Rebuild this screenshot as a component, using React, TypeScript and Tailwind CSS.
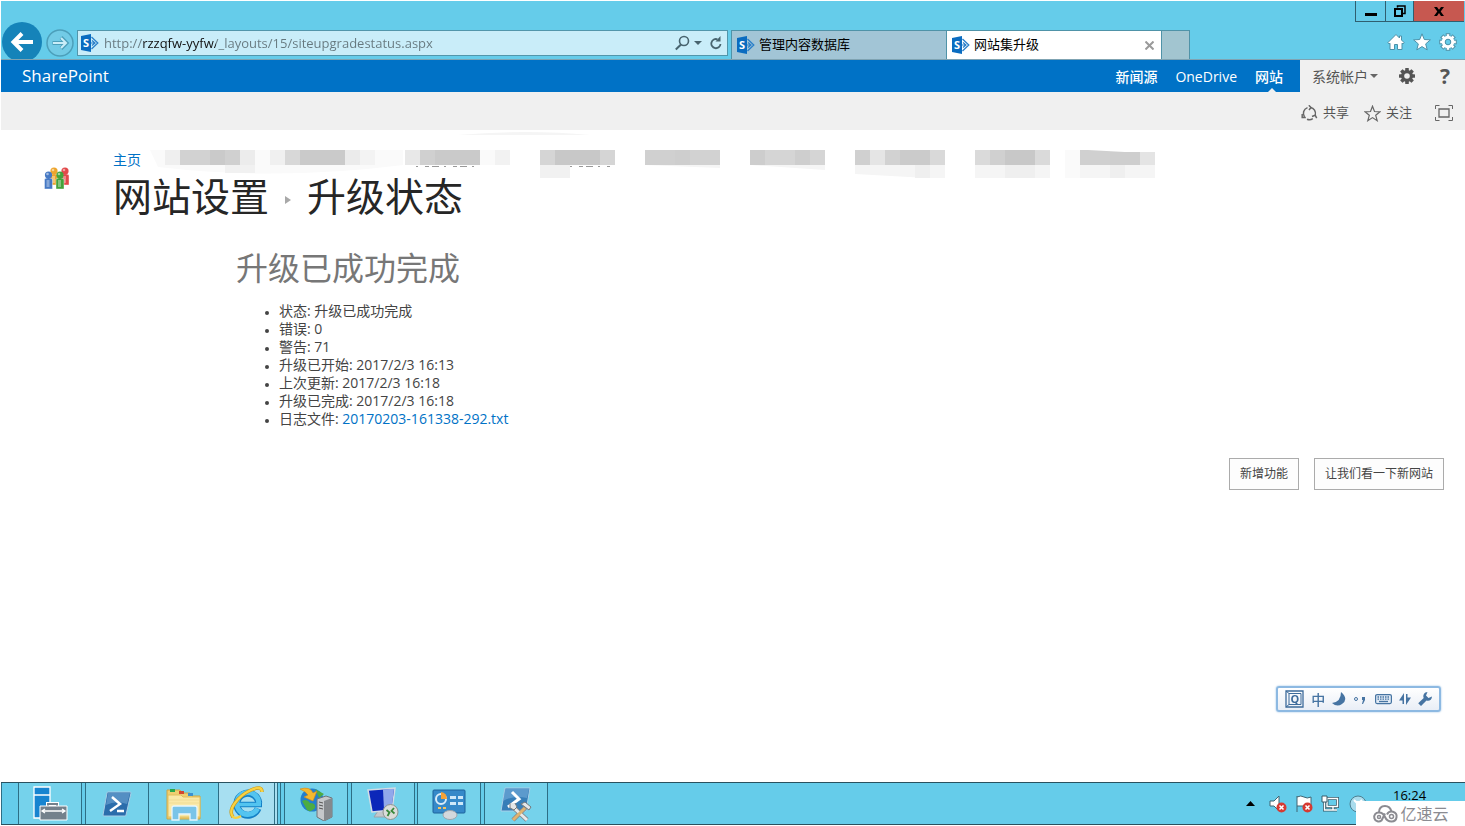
import type { ReactNode } from 'react'

const FONT = "font-['Open_Sans','Noto_Sans_CJK_SC',sans-serif]"

const tabs = [
  { title: '管理内容数据库', active: false },
  { title: '网站集升级', active: true },
]

const details = [
  { label: '状态', value: '升级已成功完成' },
  { label: '错误', value: '0' },
  { label: '警告', value: '71' },
  { label: '升级已开始', value: '2017/2/3 16:13' },
  { label: '上次更新', value: '2017/2/3 16:18' },
  { label: '升级已完成', value: '2017/2/3 16:18' },
]

// Hidden navigation entries: x, width, grey
const mosaic: [number, number, string][] = [
  [15, 15, '#efefef'], [30, 30, '#d2d2d2'], [60, 15, '#cacaca'], [75, 15, '#d0d0d0'], [90, 15, '#ececec'],
  [120, 15, '#f0f0f0'], [135, 15, '#d8d8d8'], [150, 45, '#cacaca'], [195, 15, '#ebebeb'], [210, 15, '#f3f3f3'], [225, 15, '#fafafa'],
  [255, 15, '#e8e8e8'], [270, 15, '#d0d0d0'], [285, 45, '#cacaca'], [330, 15, '#fafafa'], [345, 15, '#f2f2f2'],
  [390, 15, '#d5d5d5'], [405, 45, '#c8c8c8'], [450, 15, '#d5d5d5'],
  [495, 30, '#d0d0d0'], [525, 15, '#cecece'], [540, 30, '#d2d2d2'],
  [600, 15, '#cdcdcd'], [615, 30, '#d5d5d5'], [645, 15, '#cecece'], [660, 15, '#d5d5d5'],
  [705, 15, '#d0d0d0'], [720, 15, '#e5e5e5'], [735, 15, '#d2d2d2'], [750, 30, '#cbcbcb'], [780, 15, '#d9d9d9'],
  [825, 15, '#dadada'], [840, 15, '#d0d0d0'], [855, 30, '#c8c8c8'], [885, 15, '#dadada'],
]

function SharePointIcon() {
  return (
    <svg width="18" height="18" viewBox="0 0 18 18" aria-hidden="true" className="shrink-0">
      <path d="M10.500 3 16.800 9l-6.300 6" fill="none" stroke="#2a7fc9" strokeWidth="1.300" />
      <path d="M11 6.500 14 9l-3 2.500M9 9h5" fill="none" stroke="#2a7fc9" strokeWidth="1.200" />
      <path d="M0 2 10 0v18L0 16z" fill="#0a6cc0" />
      <text x="5" y="13" textAnchor="middle" fontSize="11" fontWeight="700" fill="#fff">S</text>
    </svg>
  )
}

function Gear({ className }: { className: string }) {
  return (
    <svg width="18" height="18" viewBox="-9 -9 18 18" className={className} aria-hidden="true">
      {[0, 45, 90, 135].map((a) => (
        <rect key={a} x="-1.800" y="-8" width="3.600" height="16" rx="0.500" fill="currentColor" transform={`rotate(${a})`} />
      ))}
      <circle r="4.500" fill="none" stroke="currentColor" strokeWidth="3" />
      <circle r="2.800" className="fill-[#f0f0f0]" />
    </svg>
  )
}

function WindowButtons() {
  return (
    <div className="flex h-[21px] border-b border-l border-[#2f5f70]">
      <button aria-label="最小化" className="flex w-[30px] items-center justify-center border-r border-[#2f5f70]">
        <svg width="12" height="12" viewBox="0 0 12 12"><path d="M0 8h12v3H0z" /></svg>
      </button>
      <button aria-label="还原" className="flex w-[28px] items-center justify-center border-r border-[#2f5f70]">
        <svg width="12" height="12" viewBox="0 0 12 12" fill="none" stroke="#000">
          <path d="M3.500 2.500V1h7.500v7.500H9" strokeWidth="1.500" />
          <path d="M1 4h7v7H1z" strokeWidth="2" />
        </svg>
      </button>
      <button aria-label="关闭" className="flex w-[50px] items-center justify-center bg-[#c75850]">
        <svg width="10" height="9" viewBox="0 0 10 9"><path d="M0 0h3l2 2.800L7 0h3L6.700 4.400 10 9H7L5 6 3 9H0l3.300-4.600z" /></svg>
      </button>
    </div>
  )
}

function BrowserBar() {
  return (
    <header className="flex h-[59px] items-end border-b border-[#7fa3b2] bg-[#65ccea] pr-px">
      <button aria-label="后退" className="ml-px shrink-0">
        <svg width="40" height="37" viewBox="0 0 40 37" className="block">
          <circle cx="20" cy="20" r="20" fill="#1583b9" />
          <path d="M31 20H12M20 11.500 11.500 20l8.500 8.500" fill="none" stroke="#fff" strokeWidth="4" />
        </svg>
      </button>
      <button aria-label="前进" className="mr-[3px] ml-1 shrink-0 pb-[2px]">
        <svg width="28" height="28" viewBox="0 0 28 28" className="block">
          <circle cx="14" cy="14" r="13" fill="#72cbe6" stroke="#4c9fba" strokeWidth="1.500" />
          <path d="M6.500 14h14M15 8.500l5.500 5.500-5.500 5.500" fill="none" stroke="#4c9fba" strokeWidth="4" />
          <path d="M7 14h13M15 9l5 5-5 5" fill="none" stroke="#c9edf8" strokeWidth="2" />
        </svg>
      </button>
      <div className="mb-[3px] flex h-[26px] min-w-0 flex-1 items-center border border-[#5296ab] bg-[#c9edf9] pl-[3px]">
        <SharePointIcon />
        <input
          aria-label="地址"
          defaultValue="http://rzzqfw-yyfw/_layouts/15/siteupgradestatus.aspx"
          className="ml-[5px] h-6 min-w-0 flex-1 bg-[linear-gradient(90deg,#66787e_38px,#111_38px,#111_112px,#66787e_112px)] bg-clip-text text-[13px] text-transparent outline-none"
        />
        <button aria-label="搜索" className="mr-1">
          <svg width="15" height="16" viewBox="0 0 15 16" fill="none" stroke="#48646f" strokeWidth="1.600">
            <circle cx="9" cy="6" r="4.500" />
            <path d="M6 9.500.800 14.500" strokeWidth="2" />
          </svg>
        </button>
        <button aria-label="搜索选项" className="mr-2">
          <svg width="8" height="4" viewBox="0 0 8 4" fill="#48646f"><path d="M0 0h8L4 4z" /></svg>
        </button>
        <button aria-label="刷新" className="mr-[5px]">
          <svg width="12" height="14" viewBox="0 0 12 14" fill="none" stroke="#48646f" strokeWidth="1.800">
            <path d="M10.500 8a4.600 4.600 0 1 1-3-4.700" />
            <path d="M10.500 0v5.500H5.500z" fill="#48646f" stroke="none" />
          </svg>
        </button>
      </div>
      <div className="ml-[3px] flex h-[29px] border-t border-l border-[#4f93a8]">
        {tabs.map((tab) => (
          <div
            key={tab.title}
            className={`flex w-[215px] items-center border-r border-[#4f93a8] px-[5px] ${tab.active ? 'bg-white' : 'bg-[#a2c5d6]'}`}
          >
            <SharePointIcon />
            <a href="#" className="ml-1 flex-1 text-[13px] text-black">{tab.title}</a>
            {tab.active && (
              <button aria-label="关闭选项卡" className="mr-[2px]">
                <svg width="9" height="9" viewBox="0 0 9 9" stroke="#9a9a9a" strokeWidth="2"><path d="M.500.500l8 8M8.500.500l-8 8" /></svg>
              </button>
            )}
          </div>
        ))}
        <button aria-label="新建选项卡" className="w-7 border-r border-[#4f93a8] bg-[#a2c5d0]" />
      </div>
      <div className="flex w-[274px] shrink-0 flex-col items-end self-stretch">
        <WindowButtons />
        <div className="mt-[11px] mr-[7px] flex items-center gap-2">
          <button aria-label="主页">
            <svg width="18" height="18" viewBox="0 0 18 18" fill="#fff" stroke="#4c91a8" strokeWidth="1">
              <path d="M9 1.500 12.500 5V3h2v4l2.500 2.500-1 1.500-1-.800V16.500h-4.500v-5h-3v5H3v-6.300L2 11 1 9.500z" />
            </svg>
          </button>
          <button aria-label="收藏夹">
            <svg width="18" height="18" viewBox="0 0 18 18" fill="#fff" stroke="#4c91a8" strokeWidth="1">
              <path d="m9 .800 2.300 5.700 6.100.400-4.700 4 1.500 6L9 13.600l-5.200 3.300 1.500-6-4.700-4 6.100-.400z" />
            </svg>
          </button>
          <button aria-label="工具">
            <svg width="18" height="18" viewBox="-9 -9 18 18">
              {[0, 45, 90, 135].map((a) => (
                <rect key={a} x="-1.800" y="-8.300" width="3.600" height="16.600" fill="#fff" stroke="#4c91a8" transform={`rotate(${a})`} />
              ))}
              <circle r="4.600" fill="none" stroke="#fff" strokeWidth="3.200" />
              <circle r="2.800" fill="#65ccea" stroke="#4c91a8" />
            </svg>
          </button>
        </div>
      </div>
    </header>
  )
}

function SuiteBar() {
  return (
    <div className="flex h-8 bg-[#f0f0f0] text-[14px]">
      <nav className="flex flex-1 items-center justify-between bg-[#0072c6] pr-[17px] pl-[21px] text-white">
        <a href="#" className="text-[17px]">SharePoint</a>
        <div className="flex h-full items-center gap-[18px] font-medium">
          <a href="#">新闻源</a>
          <a href="#">OneDrive</a>
          <a href="#" className="relative flex h-full items-center">
            网站
            <svg width="8" height="4" viewBox="0 0 8 4" fill="#f0f0f0" className="absolute bottom-0 left-[13px]"><path d="M4 0 8 4H0z" /></svg>
          </a>
        </div>
      </nav>
      <div className="flex items-center pr-[14px] pl-3 text-[#555]">
        <button className="flex items-center gap-[2px]">
          系统帐户
          <svg width="8" height="4" viewBox="0 0 8 4" fill="#666"><path d="M0 0h8L4 4z" /></svg>
        </button>
        <button aria-label="设置" className="ml-5"><Gear className="text-[#555]" /></button>
        <button aria-label="帮助" className="ml-[23px] w-3 text-[21px] leading-8 font-bold">?</button>
      </div>
    </div>
  )
}

function ActionBar() {
  return (
    <div className="flex h-[38px] items-center justify-end bg-[#f0f0f0] pt-1 pr-3 text-[13px] text-[#555]">
      <button className="flex items-center gap-[5px]">
        <svg width="17" height="17" viewBox="0 0 17 17" fill="none" stroke="#666" strokeWidth="1.500">
          <path d="M6.500 2.600A6.200 6.200 0 0 0 3.500 12M9.500 2.400a6.200 6.200 0 0 1 4.800 7.600M6 14.200a6.200 6.200 0 0 0 5.800-.500" />
          <path d="M1.200 9v3.500h3.600M7.800.300 10 2.500 8 5M11 11.500l3.200-1.300 1.500 3" />
        </svg>
        共享
      </button>
      <button className="ml-[15px] flex items-center gap-[5px]">
        <svg width="17" height="17" viewBox="0 0 17 17" fill="none" stroke="#666" strokeWidth="1.200">
          <path d="m8.500 1.200 2 5.300 5.500.300-4.300 3.500 1.500 5.400-4.700-3.100-4.700 3.100 1.500-5.400L1 6.800l5.500-.300z" />
        </svg>
        关注
      </button>
      <button aria-label="全屏" className="ml-[23px]">
        <svg width="18" height="16" viewBox="0 0 18 16" fill="none" stroke="#666">
          <path d="M.500 4V.500h4M13.500.500h4V4M17.500 12v3.500h-4M4.500 15.500h-4V12" />
          <path d="M4 4h10v8H4z" strokeWidth="1.300" />
        </svg>
      </button>
    </div>
  )
}

function SiteLogo() {
  const people: [number, number, string][] = [
    [10, 0, '#eda52d'],
    [21, 0, '#e2494a'],
    [4.5, 4, '#4679c4'],
    [16, 4, '#43a33b'],
  ]
  return (
    <svg width="26" height="23" viewBox="0 0 26 23" aria-hidden="true">
      {people.map(([x, y, color]) => (
        <g key={color} fill={color}>
          <path d={`M${x - 4} ${y + 8}q4-3 8 0v10h-8z`} stroke="#fff" strokeWidth=".400" />
          <path d={`M${x - 2} ${y + 9}h3v7h-3z`} fill="#fff" opacity=".35" />
          <circle cx={x} cy={y + 4} r="3.600" />
          <circle cx={x - 1} cy={y + 3} r="1.300" fill="#fff" opacity=".5" />
        </g>
      ))}
    </svg>
  )
}

function HiddenLinks() {
  return (
    <svg width="1010" height="50" viewBox="0 0 1010 50" aria-hidden="true" className="shrink-0">
      <path d="M308 5q70-6 132 0z" fill="#f5f5f5" />
      <path d="M0 20 8 37q120 14 245-2V20z" fill="#fafafa" />
      <path d="M75 35h30v8H75zM390 35h30v15h-30z" fill="#f1f1f1" />
      <path d="M495 35h75v3zM600 35h75v5zM705 35h90v14l-90-5zM825 35h75v14h-75zM930 35h75v15h-75z" fill="#f5f5f5" />
      <path d="M765 35h15v13h-15zM855 35h30v15h-30zM960 35h15v15h-15z" fill="#efefef" />
      <path d="M915 20h15v30h-15z" fill="#fafafa" />
      {mosaic.map(([x, w, fill]) => (
        <rect key={x} x={x} y="20" width={w} height="15" fill={fill} />
      ))}
      <path d="M930 20h8l37 2v13h-45z" fill="#d0d0d0" />
      <path d="M960 22h30v13h-30z" fill="#cecece" />
      <path d="M990 22h15v13h-15z" fill="#e4e4e4" />
      <path d="M266 36.500h64M420 36.500h40" stroke="#999" strokeDasharray="2 7 4 3 7 5" />
    </svg>
  )
}

function ImeBar() {
  return (
    <div className="fixed right-6 bottom-[114px] flex h-[26px] w-[165px] items-center justify-between rounded-[3px] border-2 border-[#8db9e2] bg-linear-to-b from-white to-[#e9eef6] px-[7px] text-[14px] font-medium text-[#4674a2] shadow-[0_0_2px_#8db9e2]">
      <svg width="19" height="18" viewBox="0 0 19 18" fill="none" stroke="#3d6b9b">
        <path d="M1 1h17v16H1z" strokeWidth="1.300" />
        <path d="M4 3.500h12v11H4z" />
        <path d="M1 1l3 2.500M1 17l3-2.500" />
        <text x="10" y="13" textAnchor="middle" fontSize="11" fontWeight="700" fill="#3d6b9b" stroke="none">Q</text>
      </svg>
      <span>中</span>
      <svg width="14" height="14" viewBox="0 0 14 14" fill="#4674a2"><path d="M9 0q8 7 1 12-5 3.500-10-1Q9 10 9 0z" /></svg>
      <svg width="14" height="12" viewBox="0 0 14 12"><circle cx="3" cy="6" r="1.500" fill="none" stroke="#4674a2" /><path d="M9 4h3v3l-2 4H9l1-4H9z" fill="#4674a2" /></svg>
      <svg width="17" height="12" viewBox="0 0 17 12">
        <rect x=".600" y="1.600" width="15.800" height="9" rx="1.500" fill="#dfe9f4" stroke="#4674a2" strokeWidth="1.200" />
        <path d="M2.500 4h12M2.500 6.200h12" stroke="#4674a2" strokeWidth="1.300" strokeDasharray="1.500 1" />
        <path d="M4 8.500h9" stroke="#4674a2" strokeWidth="1.300" />
      </svg>
      <svg width="12" height="14" viewBox="0 0 12 14" fill="#4674a2"><path d="M5 1v11H3.500V8.500H0zM7 13V2h1.500v3.500H12z" /></svg>
      <svg width="14" height="14" viewBox="0 0 14 14" fill="#4674a2"><path d="M9.500 0 8 3.500 10.500 6 14 4.500C14 8 11 9.500 8.500 8.500L3 14 .200 11.200 5.700 6C4.500 3 6.500 0 9.500 0z" /></svg>
    </div>
  )
}

function ServerManagerIcon() {
  return (
    <svg width="36" height="36" viewBox="0 0 36 36">
      <path d="M2 1h16v31H2z" fill="#1784d0" stroke="#fff" strokeWidth="1.300" />
      <path d="M2 9h16" stroke="#fff" strokeWidth="1.500" />
      <path d="M16 21v-3h9v3" fill="none" stroke="#fff" strokeWidth="4" />
      <path d="M16 21v-3h9v3" fill="none" stroke="#74818c" strokeWidth="2" />
      <path d="M8 20h27v14H8z" fill="#74818c" stroke="#fff" />
      <path d="M11 25h21M13 23l-3 2 3 2M30 23l3 2-3 2" fill="none" stroke="#fff" strokeWidth="1.300" />
    </svg>
  )
}

function PowerShellIcon() {
  return (
    <svg width="30" height="26" viewBox="0 0 30 26">
      <path d="M6 1h22q1 0 1 1l-5 22q0 1-1 1H2q-1 0-1-1L5 2q0-1 1-1z" fill="#2b6dab" stroke="#a9cde6" />
      <path d="M6 2h22l-3 11Q14 9 4 14z" fill="#6fa6d4" opacity=".6" />
      <path d="m10 6 8 7-10 7M15 20h7" fill="none" stroke="#fff" strokeWidth="2.500" />
    </svg>
  )
}

function ExplorerIcon() {
  return (
    <svg width="36" height="34" viewBox="0 0 36 34">
      <path d="M1 3h13l2 3h8l2 3h8v23H1z" fill="#efcf70" stroke="#cda545" />
      <path d="M4 2h5v3H4z" fill="#29a84a" />
      <path d="M13 4h5v3h-5z" fill="#d2452f" />
      <path d="M22 6h5v3h-5z" fill="#3c91cf" />
      <path d="M2 8h13l2 2h17v20H2z" fill="#fae9a8" stroke="#e1bf5e" />
      <path d="M3 13h30M3 16h30" stroke="#f0dc95" />
      <path d="M6 33V21q0-2 2-2h21q2 0 2 2v12h-7v-6H13v6z" fill="#79c4e8" stroke="#e6f6fd" strokeWidth="1.300" />
    </svg>
  )
}

function IeIcon() {
  return (
    <svg width="36" height="36" viewBox="0 0 36 36" fill="none">
      <path d="M29 22.500A11 11 0 1 1 29.800 17" stroke="#1480c6" strokeWidth="7" />
      <path d="M9 18.500h24" stroke="#1480c6" strokeWidth="5.500" />
      <path d="M28.600 22.500A11 11 0 1 1 29.800 17" stroke="#53c4f0" strokeWidth="5" />
      <path d="M10 18.500h22" stroke="#53c4f0" strokeWidth="3.500" />
      <path d="M4 31C-2 24 9 10 22 4q11-5 11 2" stroke="#c79818" strokeWidth="3.500" />
      <path d="M4 31C-2 24 9 10 22 4q11-5 11 2M4 31q3 2 8-1" stroke="#f8d243" strokeWidth="2.300" />
    </svg>
  )
}

function IisIcon() {
  return (
    <svg width="34" height="34" viewBox="0 0 34 34">
      <circle cx="13" cy="13" r="11.500" fill="#237fcd" />
      <path d="M3 14q5-3 8 2 6 0 5 5-4 5-8 2zM16 2l9 5-5 4z" fill="#4cac43" />
      <path d="M1 2q10-3 13 4l4-2-4 10-9-4 4-2Q6 4 1 2z" fill="#f4b82f" stroke="#d28718" strokeWidth=".600" />
      <path d="m18 12 9-3 6 2v19l-8 4-7-4z" fill="#c5c8cb" stroke="#6e757a" />
      <path d="m25 14 8-3v19l-8 4z" fill="#85898d" />
      <path d="m20 15 4 1M20 18l4 1M20 21l4 1" stroke="#555" />
    </svg>
  )
}

function RemoteIcon() {
  return (
    <svg width="34" height="34" viewBox="0 0 34 34">
      <path d="M12 24h9l4 6H8z" fill="#c3c8cc" stroke="#9aa4ab" />
      <path d="m2 3 27-2-3 22-20 2z" fill="#0c27b9" stroke="#d4dce4" strokeWidth="1.500" />
      <path d="m17 2.500 11-.700-2.500 20.500-7.500.700z" fill="#a9c0f2" opacity=".85" />
      <circle cx="24.500" cy="25" r="7.500" fill="#dadcda" stroke="#8d938f" />
      <path d="m20.500 23 3 2.500-2 3.500M28 21l-2.500 3 3 2.500" fill="none" stroke="#39883a" strokeWidth="1.800" />
    </svg>
  )
}

function ControlIcon() {
  return (
    <svg width="34" height="32" viewBox="0 0 34 32">
      <rect x="1" y="2" width="32" height="23" rx="1" fill="#3689c9" stroke="#1d639c" />
      <circle cx="9" cy="11" r="5" fill="#3689c9" stroke="#d9ecf9" strokeWidth="2" />
      <path d="M9 11V4q6 1 6 7z" fill="#f5a238" />
      <path d="M18 8h6v3h-6zM26 8h5v3h-5zM18 14h6v3h-6zM26 14h5v3h-5z" fill="#cee8f9" />
      <path d="M6 20h3M11 20h3" stroke="#f6c15c" strokeWidth="2" />
      <ellipse cx="18" cy="27" rx="7" ry="4.500" fill="#d3d8dc" stroke="#9ca5ac" />
    </svg>
  )
}

function ManagementShellIcon() {
  return (
    <svg width="34" height="36" viewBox="0 0 34 36">
      <path d="M6 2h25l-4 23H2z" fill="#377eb8" stroke="#a9d0e9" />
      <path d="M6 3h24l-2 9Q14 9 4 15z" fill="#74addb" opacity=".6" />
      <path d="m13 6 7 7-11 8" fill="none" stroke="#fff" strokeWidth="3" />
      <path d="m14 21 14 13M28 20 14 34" stroke="#858a8d" strokeWidth="4.500" />
      <path d="m14 21 14 13" stroke="#e7e9ea" strokeWidth="3" />
      <path d="M26 22 14 34" stroke="#dfb370" strokeWidth="3" />
      <path d="M11 17v5l4 2 3-3-2-4M22 18l4-2 6 5-2 3-4-3z" fill="#e3e6e8" stroke="#74797c" />
    </svg>
  )
}

function TaskButton({ label, className = '', children }: { label: string; className?: string; children: ReactNode }) {
  return (
    <button aria-label={label} className={`flex w-16 items-center justify-center border-x border-[#2d6e85] bg-[#75d2eb] ${className}`}>
      {children}
    </button>
  )
}

function Taskbar() {
  return (
    <footer className="flex h-[43px] border-y border-b-[#29515f] border-t-[#29515f] bg-[#65ccea]">
      <div className="flex border-l border-[#2d6e85] pl-4">
        <TaskButton label="服务器管理器" className="mr-[3px]"><ServerManagerIcon /></TaskButton>
        <TaskButton label="PowerShell"><PowerShellIcon /></TaskButton>
        <TaskButton label="文件资源管理器" className="w-[70px] border-l-0"><ExplorerIcon /></TaskButton>
        <TaskButton label="Internet Explorer" className="w-[56px] border-l-0 bg-[#a7dff1]"><IeIcon /></TaskButton>
        <div className="mr-[2px] w-[3px] border-r border-[#2d6e85] bg-[#a7dff1]" />
        <div className="mr-[3px] w-px bg-[#2d6e85]" />
        <TaskButton label="IIS 管理器" className="mr-[3px]"><IisIcon /></TaskButton>
        <TaskButton label="远程桌面" className="mr-[2px]"><RemoteIcon /></TaskButton>
        <TaskButton label="控制面板" className="mr-[3px]"><ControlIcon /></TaskButton>
        <TaskButton label="SharePoint Management Shell"><ManagementShellIcon /></TaskButton>
      </div>
      <div className="relative ml-auto flex w-[220px] items-center gap-2">
        <button aria-label="显示隐藏的图标" className="mr-[6px] ml-px">
          <svg width="9" height="5" viewBox="0 0 9 5"><path d="M4.500 0 9 5H0z" /></svg>
        </button>
        <svg width="18" height="18" viewBox="0 0 18 18">
          <path d="M1 6h4l5-5v15l-5-5H1z" fill="#fff" stroke="#416472" />
          <circle cx="12.500" cy="12.500" r="5" fill="#d63a32" />
          <path d="m10.500 10.500 4 4m0-4-4 4" stroke="#fff" strokeWidth="1.600" />
        </svg>
        <svg width="18" height="18" viewBox="0 0 18 18">
          <path d="M2 1v16M2 2q4-2 7 0t7 0v9H2" fill="#fff" stroke="#416472" />
          <circle cx="12.500" cy="12.500" r="5" fill="#d63a32" />
          <path d="m10.500 10.500 4 4m0-4-4 4" stroke="#fff" strokeWidth="1.600" />
        </svg>
        <svg width="18" height="18" viewBox="0 0 18 18" fill="none">
          <path d="M6 3.500h10.500v8H6zM8 15h8M12 12v3M3.500 7v8H8" stroke="#365c6b" strokeWidth="3" />
          <path d="M6 3.500h10.500v8H6zM8 15h8M12 12v3M3.500 7v8H8" stroke="#fff" strokeWidth="1.400" />
          <path d="M1 1h5v6H1z" fill="#fff" stroke="#365c6b" />
        </svg>
        <svg width="18" height="18" viewBox="0 0 18 18" fill="none" stroke="#4c7f91" className="ml-[2px]">
          <circle cx="9" cy="9" r="8" fill="#a9dced" />
          <path d="m5 5 3 3M13 5l-3 3" stroke="#fff" strokeWidth="2" />
        </svg>
        <time className="mb-[18px] ml-[18px] text-[13px] leading-4 text-black">16:24</time>
        <div className="absolute right-0 -bottom-[2px] flex h-[25px] w-[109px] items-center justify-center gap-px bg-white text-[16px] text-[#8b8b91]">
          <svg width="27" height="20" viewBox="0 0 27 20" fill="none" stroke="#8b8b91" strokeWidth="2">
            <path d="M7 8.500Q7 2 13 2q5 0 6.500 5.500" />
            <path d="M13 9.500 9.500 16.500A4.500 4.500 0 1 1 7 8.500q4 0 6 4.500t6.500 4.500a5 5 0 1 0-4.500-7" />
            <circle cx="7" cy="13" r="1.500" strokeWidth="1.500" />
            <circle cx="19.500" cy="12.500" r="2" strokeWidth="1.500" />
          </svg>
          亿速云
        </div>
      </div>
    </footer>
  )
}

export default function App() {
  return (
    <div className={`flex min-h-screen flex-col bg-white pt-px pb-px pl-px text-[#444] ${FONT}`}>
      <BrowserBar />
      <SuiteBar />
      <ActionBar />
      <main className="flex-1 pr-[21px] pl-[43px]">
        <div className="flex">
          <div className="w-[69px] shrink-0 pt-[37px]"><SiteLogo /></div>
          <div className="min-w-0 flex-1">
            <div className="flex h-12 items-start overflow-hidden text-[14px]">
              <a href="#" className="w-[37px] shrink-0 pt-5 leading-5 text-[#0072c6]">主页</a>
              <HiddenLinks />
            </div>
            <h1 className="flex items-center text-[39px] leading-[36px] text-[#262626]">
              <a href="#">网站设置</a>
              <svg width="6" height="8" viewBox="0 0 6 8" fill="#a8a8a8" className="mx-4 mt-2"><path d="M0 0 6 4 0 8z" /></svg>
              升级状态
            </h1>
          </div>
        </div>
        <section className="mt-[34px] pl-[192px]">
          <h2 className="text-[32px] leading-[40px] text-[#777]">升级已成功完成</h2>
          <ul className="mt-[14px] list-disc pl-[43px] text-[14px] leading-[18px] marker:text-[10px]">
            {details.map((d) => (
              <li key={d.label}>{d.label}: {d.value}</li>
            ))}
            <li>日志文件: <a href="#" className="font-medium text-[#0072c6]">20170203-161338-292.txt</a></li>
          </ul>
        </section>
        <div className="mt-[30px] flex justify-end gap-[15px] text-[12px]">
          <button className="h-8 border border-[#ababab] bg-[#fdfdfd] px-[10px]">新增功能</button>
          <button className="h-8 border border-[#ababab] bg-[#fdfdfd] px-[10px]">让我们看一下新网站</button>
        </div>
      </main>
      <ImeBar />
      <Taskbar />
    </div>
  )
}
